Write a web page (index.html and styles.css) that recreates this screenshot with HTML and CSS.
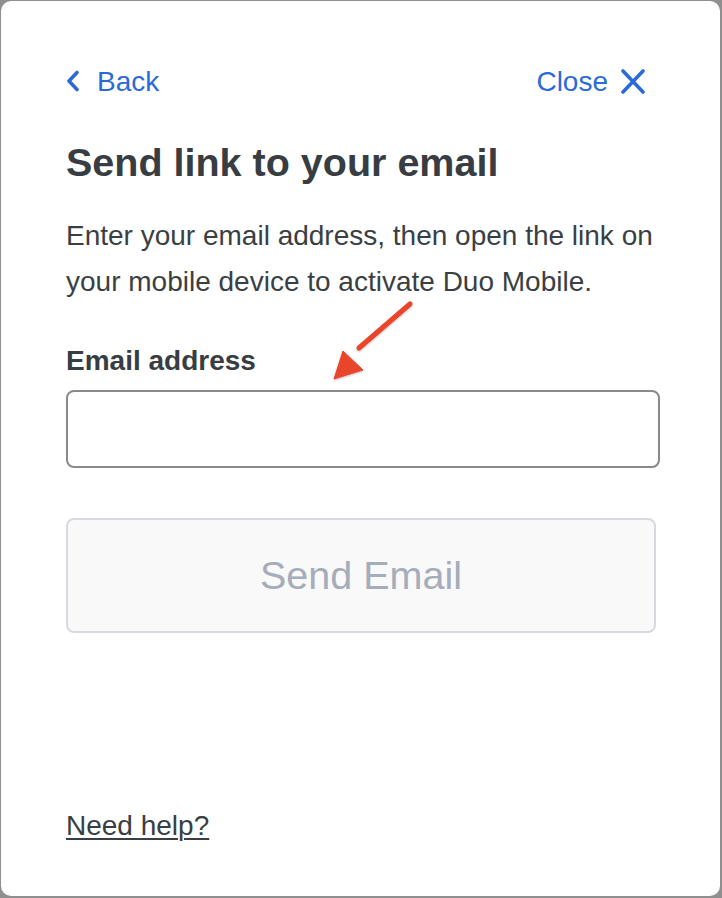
FILE: index.html
```html
<!DOCTYPE html>
<html lang="en">
<head>
<meta charset="utf-8">
<title>Send link to your email</title>
<link rel="stylesheet" href="styles.css">
</head>
<body>
<div class="card">
  <div class="nav">
    <a class="nav-link" href="#">
      <svg class="chev" width="14" height="22" viewBox="0 0 14 22" aria-hidden="true"><path d="M11 2.5 L3 11 L11 19.5" fill="none" stroke="currentColor" stroke-width="3.6" stroke-linecap="round" stroke-linejoin="round"/></svg>
      <span>Back</span>
    </a>
    <a class="nav-link" href="#">
      <span>Close</span>
      <svg class="xicon" width="26" height="25" viewBox="0 0 26 25" aria-hidden="true"><path d="M3 2 L23 23 M23 2 L3 23" fill="none" stroke="currentColor" stroke-width="3.6" stroke-linecap="round"/></svg>
    </a>
  </div>
  <h1 class="title">Send link to your email</h1>
  <p class="desc">Enter your email address, then open the link on your mobile device to activate Duo Mobile.</p>
  <label class="label" for="email">Email address</label>
  <div class="field-wrap">
    <input class="field" id="email" type="email">
    <svg class="arrow" width="100" height="90" viewBox="0 0 100 90" aria-hidden="true">
      <defs>
        <filter id="sh" x="-20%" y="-20%" width="140%" height="140%">
          <feDropShadow dx="0" dy="1" stdDeviation="1.2" flood-color="#000" flood-opacity="0.25"/>
        </filter>
      </defs>
      <g filter="url(#sh)" fill="#e8452c" stroke="#e8452c">
        <line x1="86" y1="14" x2="35" y2="58" stroke-width="5" stroke-linecap="round"/>
        <polygon points="10,89 19,61 39,80" stroke-width="1" stroke-linejoin="round"/>
      </g>
    </svg>
  </div>
  <button class="send" type="button" disabled>Send Email</button>
  <a class="help" href="#">Need help?</a>
</div>
</body>
</html>
```

FILE: styles.css
```css
* { box-sizing: border-box; }

html, body {
  margin: 0;
  padding: 0;
}

body {
  background: #8f8f8f;
  width: 722px;
  height: 898px;
  overflow: hidden;
  font-family: "Liberation Sans", Arial, Helvetica, sans-serif;
  color: #383e43;
}

.card {
  margin: 1px 2px 2px 1px;
  width: 719px;
  height: 895px;
  background: #ffffff;
  border-radius: 10px;
  padding: 65px 60px 54px 65px;
  display: flex;
  flex-direction: column;
  align-items: flex-start;
}

.nav {
  align-self: stretch;
  display: flex;
  justify-content: space-between;
  align-items: center;
  margin-right: 14px;
  height: 32px;
}

.nav-link {
  display: flex;
  align-items: center;
  color: #2b6bd8;
  text-decoration: none;
  font-size: 28px;
  line-height: 32px;
}

.chev {
  display: block;
  margin-right: 17px;
  margin-top: -2px;
}

.xicon {
  display: block;
  margin-left: 12px;
  margin-top: -2px;
}

.title {
  margin: 40px 0 0 0;
  font-size: 39.5px;
  line-height: 48px;
  font-weight: 700;
  color: #373d42;
}

.desc {
  margin: 27px 0 0 0;
  font-size: 28px;
  line-height: 46px;
  color: #3a3f44;
}

.label {
  margin-top: 40px;
  font-size: 28px;
  line-height: 32px;
  font-weight: 700;
  color: #373d42;
}

.field-wrap {
  position: relative;
  align-self: stretch;
  margin-top: 13px;
}

.field {
  display: block;
  width: 100%;
  height: 78px;
  border: 2px solid #8a8a8a;
  border-radius: 8px;
  background: #ffffff;
  font-family: inherit;
  font-size: 28px;
  padding: 0 16px;
  outline: none;
}

.arrow {
  position: absolute;
  left: 258px;
  top: -100px;
  overflow: visible;
}

.send {
  margin-top: 50px;
  align-self: stretch;
  margin-right: 4px;
  height: 115px;
  background: #f9f9fa;
  border: 2px solid #d6dae0;
  border-radius: 8px;
  font-family: inherit;
  font-size: 39.5px;
  color: #a4adb9;
  padding: 0;
}

.help {
  margin-top: auto;
  font-size: 28px;
  line-height: 32px;
  color: #383e43;
  text-decoration: underline;
  text-underline-offset: 3px;
  text-decoration-thickness: 2px;
}
```
